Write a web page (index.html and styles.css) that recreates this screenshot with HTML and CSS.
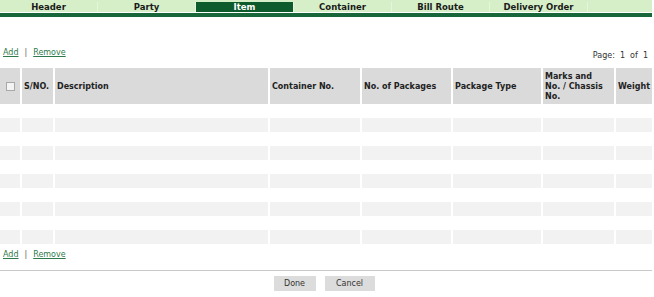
FILE: index.html
```html
<!DOCTYPE html>
<html lang="en">
<head>
    <meta charset="UTF-8">
    <title>Item</title>
    <link rel="stylesheet" href="styles.css">
</head>
<body>
    <div class="tabbar">
        <div class="tab">Header</div>
        <div class="tab">Party</div>
        <div class="tab active">Item</div>
        <div class="tab">Container</div>
        <div class="tab">Bill Route</div>
        <div class="tab">Delivery Order</div>
        <div class="tab blank"></div>
    </div>
    <div class="tabline"></div>

    <div class="toolbar">
        <div class="links"><a href="#">Add</a><span class="sep">|</span><a href="#">Remove</a></div>
        <div class="pager">Page:&nbsp; 1&nbsp; of&nbsp; 1</div>
    </div>

    <table class="grid">
        <colgroup>
            <col style="width:21px">
            <col style="width:33px">
            <col style="width:215px">
            <col style="width:92px">
            <col style="width:91px">
            <col style="width:90px">
            <col style="width:73px">
            <col style="width:37px">
        </colgroup>
        <thead>
            <tr>
                <th class="check"><span class="box"></span></th>
                <th>S/NO.</th>
                <th>Description</th>
                <th>Container No.</th>
                <th>No. of Packages</th>
                <th>Package Type</th>
                <th>Marks and<br>No. / Chassis<br>No.</th>
                <th>Weight</th>
            </tr>
        </thead>
        <tbody id="rows"></tbody>
    </table>

    <div class="toolbar bottom">
        <div class="links"><a href="#">Add</a><span class="sep">|</span><a href="#">Remove</a></div>
    </div>

    <div class="actions">
        <button type="button">Done</button>
        <button type="button">Cancel</button>
    </div>

    <script>
        const body = document.getElementById('rows');
        for (let i = 0; i < 10; i++) {
            const tr = document.createElement('tr');
            for (let c = 0; c < 8; c++) {
                tr.appendChild(document.createElement('td'));
            }
            body.appendChild(tr);
        }
    </script>
</body>
</html>
```

FILE: styles.css
```css
body {
    margin: 0;
    font-family: "DejaVu Sans", Verdana, sans-serif;
    font-size: 8px;
    color: #333;
    background-color: #fff;
    width: 652px;
}

.tabbar {
    display: flex;
    height: 12px;
    padding-top: 2px;
    box-sizing: border-box;
    background-color: #d6efc8;
}

.tab {
    width: 98px;
    height: 10px;
    line-height: 10px;
    text-align: center;
    font-weight: bold;
    font-size: 8.5px;
    color: #1a1a1a;
    border-right: 1px solid #e6f6dc;
    box-sizing: border-box;
}

.tab.active {
    background-color: #0d5a2c;
    color: #fff;
}

.tab.blank {
    flex: 1;
    border-right: none;
}

.tabline {
    height: 4px;
    margin-top: 1px;
    background-color: #17673a;
}

.toolbar {
    display: flex;
    justify-content: space-between;
    padding: 31px 4px 0 3px;
    height: 20px;
}

.links a {
    color: #2f7a4c;
    text-decoration: underline;
}

.sep {
    margin: 0 6px;
    color: #555;
}

.pager {
    padding-top: 3px;
    color: #333;
}

.grid {
    table-layout: fixed;
    width: 652px;
    border-collapse: collapse;
}

.grid th {
    height: 35px;
    padding: 1px 2px 0 2px;
    background-color: #dadada;
    border-right: 2px solid #fff;
    text-align: left;
    font-weight: bold;
    line-height: 10px;
    color: #222;
}

.grid th:last-child,
.grid td:last-child {
    border-right: none;
}

.grid th.check {
    padding-left: 6px;
}

.box {
    display: block;
    width: 7px;
    height: 7px;
    border: 1px solid #a8a8a8;
    background-color: #f4f4f4;
}

.grid td {
    height: 14px;
    padding: 0;
    border-right: 2px solid #fff;
}

.grid tbody tr:nth-child(even) td {
    background-color: #f2f2f2;
}

.toolbar.bottom {
    padding-top: 6px;
    height: 27px;
    border-bottom: 1px solid #c8c8c8;
    margin-bottom: 5px;
    width: 654px;
    box-sizing: border-box;
}

.actions {
    display: flex;
    justify-content: center;
    gap: 9px;
    padding-right: 4px;
}

.actions button {
    height: 15px;
    padding: 0;
    border: none;
    background-color: #dcdcdc;
    font-family: "DejaVu Sans", Verdana, sans-serif;
    font-size: 8px;
    color: #333;
}

.actions button:first-child {
    width: 42px;
}

.actions button:last-child {
    width: 50px;
}
```
